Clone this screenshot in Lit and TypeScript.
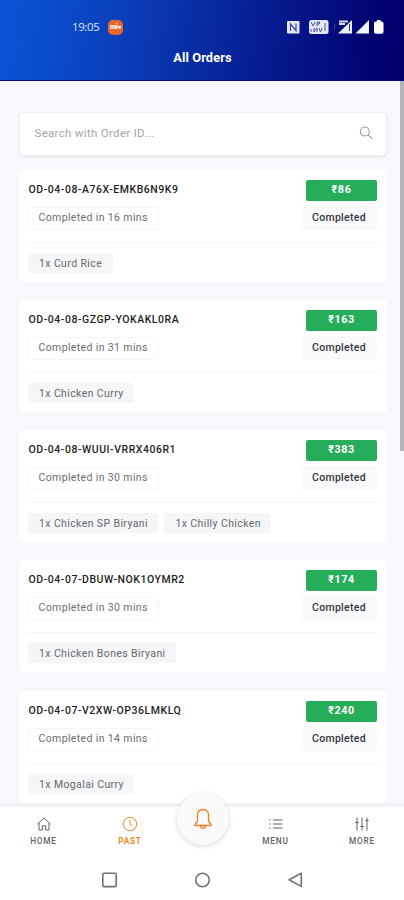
import { LitElement, html, css, svg } from "lit";
import { customElement, property } from "lit/decorators.js";

interface Order {
  id: string;
  price: string;
  mins: number;
  items: string[];
}

const ORDERS: Order[] = [
  { id: "OD-04-08-A76X-EMKB6N9K9", price: "₹86", mins: 16, items: ["1x Curd Rice"] },
  { id: "OD-04-08-GZGP-YOKAKL0RA", price: "₹163", mins: 31, items: ["1x Chicken Curry"] },
  { id: "OD-04-08-WUUI-VRRX406R1", price: "₹383", mins: 30, items: ["1x Chicken SP Biryani", "1x Chilly Chicken"] },
  { id: "OD-04-07-DBUW-NOK1OYMR2", price: "₹174", mins: 30, items: ["1x Chicken Bones Biryani"] },
  { id: "OD-04-07-V2XW-OP36LMKLQ", price: "₹240", mins: 14, items: ["1x Mogalai Curry"] },
];

@customElement("order-card")
export class OrderCard extends LitElement {
  @property({ attribute: false }) order!: Order;

  static styles = css`
    :host { display: block; box-sizing: border-box; height: 112px; padding: 10px 9px 0 9px; background: #fff; border-radius: 4px; }
    .row { display: flex; justify-content: space-between; }
    .left { display: flex; flex-direction: column; align-items: flex-start; }
    .id { height: 20px; line-height: 20px; padding-left: 0.6px; font-size: 10.5px; font-weight: 500; letter-spacing: 0.53px; color: #1d1f22; white-space: nowrap; }
    .time { box-sizing: border-box; margin-top: 7px; width: 131px; height: 23px; line-height: 19px; padding-left: 9.5px; border: 1px solid #f5f6f7; border-radius: 2px; font-size: 10.5px; letter-spacing: 0.37px; color: #6c6d70; }
    .right { display: flex; flex-direction: column; align-items: flex-end; padding-right: 1px; }
    .price { width: 71px; height: 21px; line-height: 20px; background: #25ad5a; border-radius: 2px; color: #fff; font-size: 10.8px; font-weight: 700; letter-spacing: 0.6px; text-align: center; }
    .status { margin-top: 5px; width: 76px; height: 24px; line-height: 23px; background: #f8f9fb; border-radius: 3px; color: #34373b; font-size: 10.5px; font-weight: 500; letter-spacing: 0.3px; text-align: center; }
    .items { display: flex; gap: 6px; margin-top: 12px; padding-top: 10px; border-top: 1px solid #f3f4f6; }
    .item { height: 20px; line-height: 21px; padding: 0 10.5px 0 11px; background: #f4f6f8; border-radius: 2px; color: #66686c; font-size: 10.5px; letter-spacing: 0.39px; white-space: nowrap; }
  `;

  render() {
    const o = this.order;
    return html`
      <div class="row">
        <div class="left">
          <div class="id">${o.id}</div>
          <div class="time">Completed in ${o.mins} mins</div>
        </div>
        <div class="right">
          <div class="price">${o.price}</div>
          <div class="status">Completed</div>
        </div>
      </div>
      <div class="items">${o.items.map((i) => html`<span class="item">${i}</span>`)}</div>
    `;
  }
}

const homeIcon = svg`<path d="M1.300 8.200 8 1.800l6.700 6.400M3 7v7h3.300V9.800h3.400V14H13V7"/>`;
const clockIcon = svg`<circle cx="8" cy="8" r="6.700"/><path d="M8 4v4.300l2.400 1.700"/>`;
const listIcon = svg`<path d="M1.200 4h1.500M1.200 8h1.500M1.200 12h1.500M5 4h9.500M5 8h9.500M5 12h9.500"/>`;
const slidersIcon = svg`<path d="M3 1.500v13M8 1.500v13M13 1.500v13M1.300 6.500h3.400M6.300 10.500h3.400M11.300 4.600h3.400"/>`;

@customElement("app-root")
export class AppRoot extends LitElement {
  static styles = css`
    :host { display: flex; flex-direction: column; position: relative; width: 404px; height: 900px; overflow: hidden; background: #f6f8fb; font-family: Roboto, "Noto Sans", sans-serif; }
    .header { box-sizing: border-box; flex: none; height: 81px; background: linear-gradient(98deg, #0a56d8 0%, #0a3fb9 30%, #062399 58%, #020270 92%, #02006a 100%); border-bottom: 1px solid #08088a; color: #fff; }
    .statusbar { display: flex; align-items: center; height: 44px; padding: 10px 20px 0 72px; box-sizing: border-box; }
    .clock { width: 36px; line-height: 14px; font-family: "Open Sans", sans-serif; font-size: 11.5px; letter-spacing: -0.4px; color: #dbe6fc; }
    .app { display: flex; align-items: center; justify-content: center; width: 15px; height: 15px; border-radius: 5px; background: #e9652b; color: #fff; font-size: 7px; font-weight: 900; letter-spacing: -0.4px; }
    .signals { margin-left: auto; display: block; }
    .title { height: 27px; line-height: 27px; padding-left: 1px; text-align: center; font-size: 12.8px; font-weight: 700; letter-spacing: 0.1px; }
    .content { flex: none; height: 725px; overflow: hidden; box-sizing: border-box; padding: 31px 16px 0 19px; }
    .search { box-sizing: border-box; display: flex; align-items: center; justify-content: space-between; width: 368px; height: 44px; padding: 0 13px 2px 14.500px; border: 1px solid #edeff2; border-radius: 5px; background: #fff; box-shadow: 0 1px 2px rgba(40, 50, 70, 0.1); font-size: 11.5px; letter-spacing: 0.31px; color: #a3a5a8; }
    .search svg { display: block; }
    .cards { display: flex; flex-direction: column; gap: 18.150px; width: 368px; margin-top: 14px; }
    .cards order-card { flex: none; }
    .scroll { position: absolute; right: 0; top: 81px; width: 4px; height: 370px; background: #b4b5b8; }
    .tabs { flex: none; box-sizing: border-box; display: grid; grid-template-columns: 87px 86px 59px 87px 86px; height: 53px; background: #fff; border-top: 1px solid #f7f8fa; box-shadow: 0 -1px 3px rgba(40, 50, 80, 0.08); }
    .tab { display: flex; flex-direction: column; align-items: center; padding-top: 9px; color: #606266; font-size: 8.300px; font-weight: 500; letter-spacing: 0.75px; }
    .tab svg { margin-bottom: 4px; fill: none; stroke: currentColor; stroke-width: 1; }
    .tab.on { color: #ef8a22; font-weight: 700; }
    .bell { position: absolute; left: 177px; top: 793px; width: 52px; height: 52px; border-radius: 50%; background: #fafafb; box-shadow: 0 1px 5px rgba(0, 0, 0, 0.16); display: flex; align-items: center; justify-content: center; }
    .sys { flex: 1; display: flex; align-items: flex-start; background: #fff; }
    .sys svg { display: block; margin-top: 12px; }
  `;

  private tab(icon: unknown, label: string, on = false) {
    return html`<div class="tab ${on ? "on" : ""}">
      <svg width="16" height="16" viewBox="0 0 16 16">${icon}</svg>
      <span>${label}</span>
    </div>`;
  }

  render() {
    return html`
      <div class="header">
        <div class="statusbar">
          <span class="clock">19:05</span>
          <span class="app">mi●</span>
          <svg class="signals" width="98" height="16" viewBox="286 19 98 16">
            <rect x="287" y="21" width="12.500" height="12.500" rx="1" fill="#e4e7f8"/>
            <path d="M290.500 31v-7l5.500 6.500v-7" fill="none" stroke="#3542a0" stroke-width="1.200"/>
            <rect x="309" y="20" width="19.500" height="14" rx="2.500" fill="#e4e7f8"/>
            <path d="M311 22l2 4 2-4M317 26v-4h2.500v2H317M311 29v3M314 28v4l3-4v4M319 28l1.500 4 1.500-4M325 23v8" fill="none" stroke="#4a53a0"/>
            <path d="M335 24.500q-1.500 2.500 0 5" fill="none" stroke="#4b50a8"/>
            <path d="M338 33.500 352 20v13.500z" fill="#eceefa"/>
            <path d="M339 21.500h9M339 24h6" fill="none" stroke="#d4d8f0" stroke-width="2"/>
            <path d="M349.500 24v7" stroke="#30358c"/>
            <path d="M355.500 33.500 369 20v13.500z" fill="#f4f5fd"/>
            <path d="M377 20h3.500v1.500h1q2 0 2 2V32q0 1.700-2 1.700h-5.500q-2 0-2-1.700v-8.500q0-2 2-2h1z" fill="#fff"/>
          </svg>
        </div>
        <div class="title">All Orders</div>
      </div>
      <div class="content">
        <div class="search">
          <span>Search with Order ID...</span>
          <svg width="14" height="14" viewBox="0 0 14 14" fill="none" stroke="#96989c" stroke-width="1.100">
            <circle cx="5.800" cy="5.500" r="4.500"/><path d="M9 8.800l4.200 3.900"/>
          </svg>
        </div>
        <div class="cards">${ORDERS.map((o) => html`<order-card .order=${o}></order-card>`)}</div>
      </div>
      <div class="tabs">
        ${this.tab(homeIcon, "HOME")} ${this.tab(clockIcon, "PAST", true)}
        <span></span>
        ${this.tab(listIcon, "MENU")} ${this.tab(slidersIcon, "MORE")}
      </div>
      <div class="sys">
        <svg width="404" height="18" viewBox="0 871 404 18" fill="none" stroke="#707174" stroke-width="1.600">
          <rect x="102.800" y="873.200" width="13.400" height="13.400" rx="1"/>
          <circle cx="202.500" cy="880" r="6.800"/>
          <path d="M289 879.800l12.300-6.600v13.200z" stroke-linejoin="round"/>
        </svg>
      </div>
      <div class="scroll"></div>
      <div class="bell">
        <svg width="22" height="24" viewBox="0 0 22 24" fill="none" stroke="#ee7d1c" stroke-width="1.300" stroke-linejoin="round">
          <path d="M11 2.500c-3.800 0-5.500 2.500-5.500 5.500v5.500c0 1.500-1 2.500-2.500 3.500v1.500h16V17c-1.500-1-2.500-2-2.500-3.500V8c0-3-1.700-5.500-5.500-5.500z"/>
          <path d="M8.500 18.500q.3 2.800 2.500 2.800t2.500-2.800"/>
        </svg>
      </div>
    `;
  }
}
